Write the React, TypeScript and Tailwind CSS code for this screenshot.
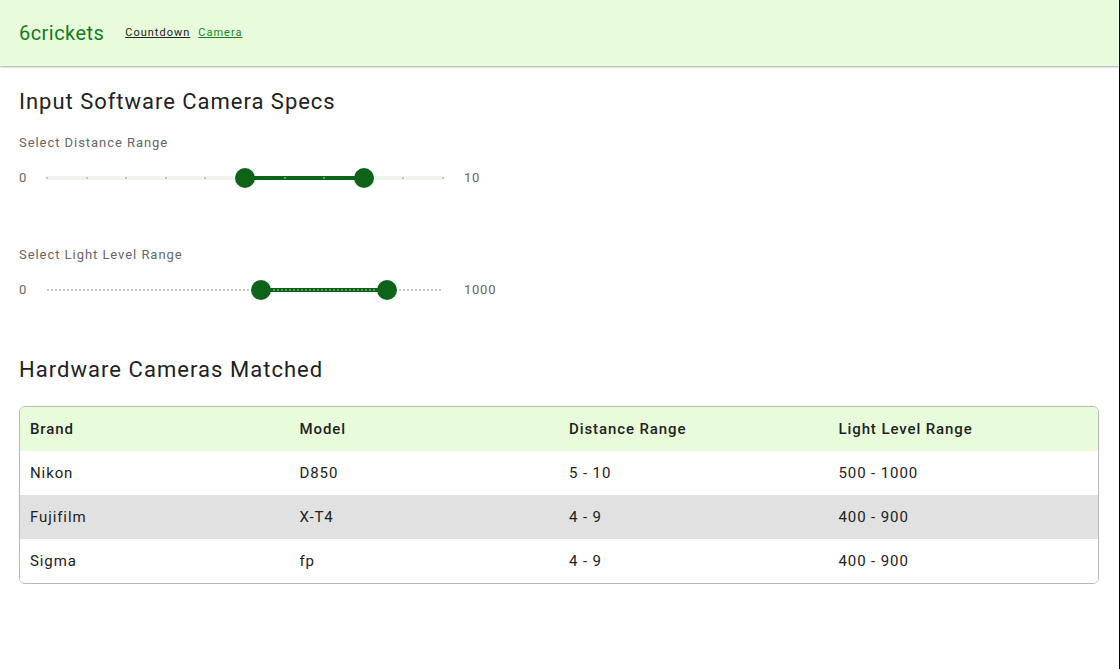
import React from "react";

const TRACK_W = 396;

function Thumb({ x }: { x: number }) {
  return (
    <div
      className="absolute top-1/2 w-[20px] h-[20px] -mt-[10px] -ml-[10px] rounded-full bg-[#0d6317]"
      style={{ left: x }}
    />
  );
}

function DistanceSlider() {
  const ticks = Array.from({ length: 11 }, (_, i) => (i * TRACK_W) / 10);
  const a = (5 * TRACK_W) / 10;
  const b = (8 * TRACK_W) / 10;
  return (
    <div className="relative w-[396px] h-[24px]">
      <div className="absolute left-0 right-0 top-1/2 h-[4px] -mt-[2px] bg-[#f1f2ee]" />
      <div
        className="absolute top-1/2 h-[4px] -mt-[2px] bg-[#0d6317]"
        style={{ left: a, width: b - a }}
      />
      {ticks.map((t, i) => (
        <div
          key={i}
          className={
            "absolute top-1/2 w-[2px] h-[2px] -mt-[1px] -ml-[1px] " +
            (i > 5 && i < 8 ? "bg-[#6c9a70]" : "bg-[#c4c4c0]")
          }
          style={{ left: t }}
        />
      ))}
      <Thumb x={a} />
      <Thumb x={b} />
    </div>
  );
}

function LightSlider() {
  const a = 214;
  const b = 340;
  return (
    <div className="relative w-[396px] h-[24px]">
      <div className="absolute left-0 right-0 top-1/2 h-[2px] -mt-[1px] bg-[repeating-linear-gradient(90deg,#c6c6c2_0_2px,transparent_2px_4px)]" />
      <div
        className="absolute top-1/2 h-[4px] -mt-[2px] bg-[#0d6317]"
        style={{ left: a, width: b - a }}
      />
      <div
        className="absolute top-1/2 h-[2px] -mt-[1px] bg-[repeating-linear-gradient(90deg,#5f9465_0_2px,transparent_2px_4px)]"
        style={{ left: a, width: b - a }}
      />
      <Thumb x={a} />
      <Thumb x={b} />
    </div>
  );
}

const rows = [
  ["Nikon", "D850", "5 - 10", "500 - 1000"],
  ["Fujifilm", "X-T4", "4 - 9", "400 - 900"],
  ["Sigma", "fp", "4 - 9", "400 - 900"],
];

export default function App() {
  return (
    <div
      className="w-[1120px] h-[669px] bg-white border-r border-black overflow-hidden text-[#222]"
      style={{ fontFamily: "Roboto, 'Liberation Sans', sans-serif" }}
    >
      <header className="h-[66px] bg-[#e8fcdc] flex items-center pl-[19px] shadow-[0_1px_2px_rgba(0,0,0,0.35)] relative">
        <span className="text-[20px] tracking-[0.45px] text-[#147a1c] mr-[21px] leading-none">6crickets</span>
        <a className="text-[11px] tracking-[1px] underline text-[#222] mr-[8px] mt-[1px]">Countdown</a>
        <a className="text-[11px] tracking-[1px] underline text-[#15821f] mt-[1px]">Camera</a>
      </header>
      <main className="pl-[19px] pr-[20px]">
        <h2 className="mt-[23px] text-[22px] leading-[26px] tracking-[0.98px] text-[#222]">Input Software Camera Specs</h2>
        <div className="mt-[20px] text-[13px] leading-[16px] text-[#666] tracking-[0.95px]">Select Distance Range</div>
        <div className="mt-[15px] flex items-center h-[24px] text-[13px] tracking-[0.75px] text-[#666]">
          <span className="w-[28px]">0</span>
          <DistanceSlider />
          <span className="ml-[21px]">10</span>
        </div>
        <div className="mt-[57px] text-[13px] leading-[16px] text-[#666] tracking-[0.95px]">Select Light Level Range</div>
        <div className="mt-[15px] flex items-center h-[24px] text-[13px] tracking-[0.75px] text-[#666]">
          <span className="w-[28px]">0</span>
          <LightSlider />
          <span className="ml-[21px]">1000</span>
        </div>
        <h2 className="mt-[55px] text-[22px] leading-[26px] tracking-[1.04px] text-[#222]">Hardware Cameras Matched</h2>
        <div className="mt-[23px] w-[1080px] border border-[#b8b8b8] rounded-[6px] overflow-hidden">
          <div className="grid grid-cols-4 h-[44px] items-center bg-[#e8fcdc] text-[15px] tracking-[0.9px] font-medium text-[#222]">
            {["Brand", "Model", "Distance Range", "Light Level Range"].map((h) => (
              <div key={h} className="pl-[10px]">{h}</div>
            ))}
          </div>
          {rows.map((r, i) => (
            <div
              key={i}
              className={
                "grid grid-cols-4 h-[44px] items-center text-[15px] tracking-[0.9px] text-[#222] " +
                (i === 1 ? "bg-[#e1e1e1]" : "bg-white")
              }
            >
              {r.map((c, j) => (
                <div key={j} className="pl-[10px]">{c}</div>
              ))}
            </div>
          ))}
        </div>
      </main>
    </div>
  );
}
